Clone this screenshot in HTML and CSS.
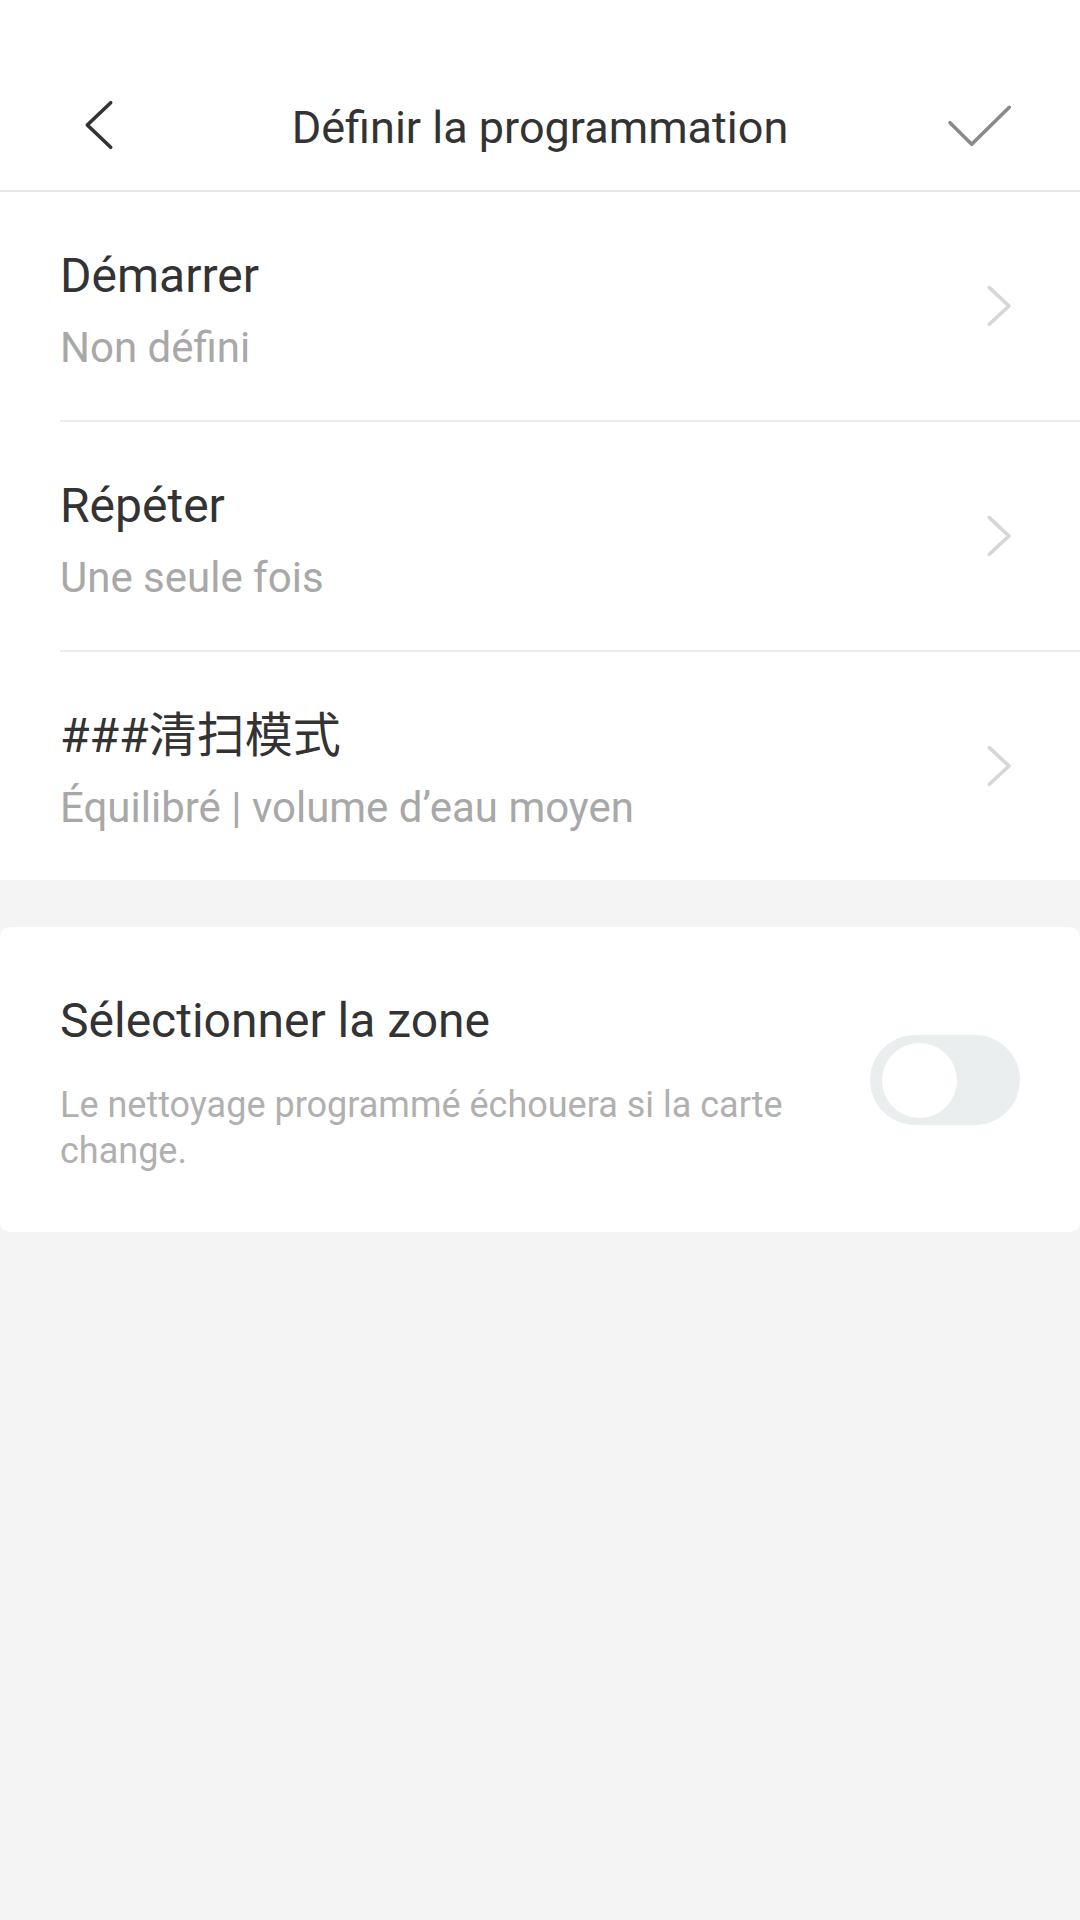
FILE: index.html
```html
<!DOCTYPE html>
<html lang="fr">
<head>
  <meta charset="UTF-8">
  <meta name="viewport" content="width=device-width, initial-scale=1.0">
  <title>Définir la programmation</title>
  <link rel="stylesheet" href="styles.css">
</head>
<body>
  <div class="header">
    <div class="toolbar">
      <div class="nav-left">
        <svg class="icon-back" width="40" height="60" viewBox="0 0 40 60">
          <polyline points="30.7,4.7 7.3,27 30.7,49.3" />
        </svg>
      </div>
      <h1 class="title">Définir la programmation</h1>
      <div class="nav-right">
        <svg class="icon-check" width="70" height="50" viewBox="0 0 70 50">
          <polyline points="5,19.7 26.7,41.3 64.3,4.3" />
        </svg>
      </div>
    </div>
  </div>

  <div class="list">
    <div class="row">
      <div class="row-inner">
        <div class="row-text">
          <div class="row-title">Démarrer</div>
          <div class="row-sub">Non défini</div>
        </div>
        <svg class="chevron" width="30" height="46" viewBox="0 0 30 46">
          <polyline points="4.3,4.6 24,23 4.3,41.3" />
        </svg>
      </div>
    </div>
    <div class="row">
      <div class="row-inner">
        <div class="row-text">
          <div class="row-title">Répéter</div>
          <div class="row-sub">Une seule fois</div>
        </div>
        <svg class="chevron" width="30" height="46" viewBox="0 0 30 46">
          <polyline points="4.3,4.6 24,23 4.3,41.3" />
        </svg>
      </div>
    </div>
    <div class="row">
      <div class="row-inner last">
        <div class="row-text">
          <div class="row-title">###清扫模式</div>
          <div class="row-sub">Équilibré | volume d’eau moyen</div>
        </div>
        <svg class="chevron" width="30" height="46" viewBox="0 0 30 46">
          <polyline points="4.3,4.6 24,23 4.3,41.3" />
        </svg>
      </div>
    </div>
  </div>

  <div class="card">
    <div class="card-text">
      <div class="row-title">Sélectionner la zone</div>
      <div class="card-desc">Le nettoyage programmé échouera si la carte change.</div>
    </div>
    <div class="switch">
      <div class="knob"></div>
    </div>
  </div>
</body>
</html>
```

FILE: styles.css
```css
body {
  margin: 0;
  background-color: #f4f4f4;
  font-family: Roboto, "Noto Sans CJK SC", sans-serif;
  color: #333;
  min-height: 100vh;
}
.header {
  background: #fff;
  padding-top: 66px;
  border-bottom: 2px solid #e6e6e6;
}
.toolbar {
  height: 124px;
  display: grid;
  grid-template-columns: 200px 1fr 200px;
  align-items: center;
}
.nav-left {
  padding-left: 80px;
  display: flex;
}
.nav-right {
  display: flex;
  justify-content: flex-end;
  padding-right: 65px;
}
.title {
  margin: 0;
  font-size: 45px;
  font-weight: normal;
  text-align: center;
  color: #333;
  line-height: 56px;
}
.icon-back polyline,
.icon-check polyline,
.chevron polyline {
  fill: none;
  stroke-linecap: round;
  stroke-linejoin: round;
}
.icon-back polyline {
  stroke: #333;
  stroke-width: 3.6;
}
.icon-check polyline {
  stroke: #8a8a8a;
  stroke-width: 3.6;
}
.chevron polyline {
  stroke: #d6d6d6;
  stroke-width: 3.6;
}
.list {
  background: #fff;
}
.row {
  padding-left: 60px;
}
.row-inner {
  height: 228px;
  box-sizing: content-box;
  display: flex;
  align-items: center;
  border-bottom: 2px solid #ececec;
}
.row-inner.last {
  border-bottom: none;
}
.row-text {
  flex: 1;
  align-self: flex-start;
  padding-top: 56px;
}
.row-title {
  font-size: 48px;
  line-height: 56px;
  color: #333;
}
.row-sub {
  font-size: 42px;
  line-height: 52px;
  color: #a8a8a8;
  margin-top: 18px;
}
.chevron {
  margin-right: 65px;
}
.card {
  margin-top: 47px;
  background: #fff;
  border-radius: 10px;
  padding: 66px 60px 58px;
  display: flex;
  align-items: center;
  gap: 50px;
}
.card-text {
  flex: 1;
}
.card-desc {
  font-size: 36px;
  line-height: 46px;
  color: #b0b0b0;
  margin-top: 33px;
}
.switch {
  width: 150px;
  height: 90px;
  border-radius: 45px;
  background: #ebeeef;
  flex-shrink: 0;
  box-sizing: border-box;
  padding: 8px 12px;
  margin-bottom: 7px;
}
.knob {
  width: 75px;
  height: 75px;
  border-radius: 50%;
  background: #fff;
}
```
